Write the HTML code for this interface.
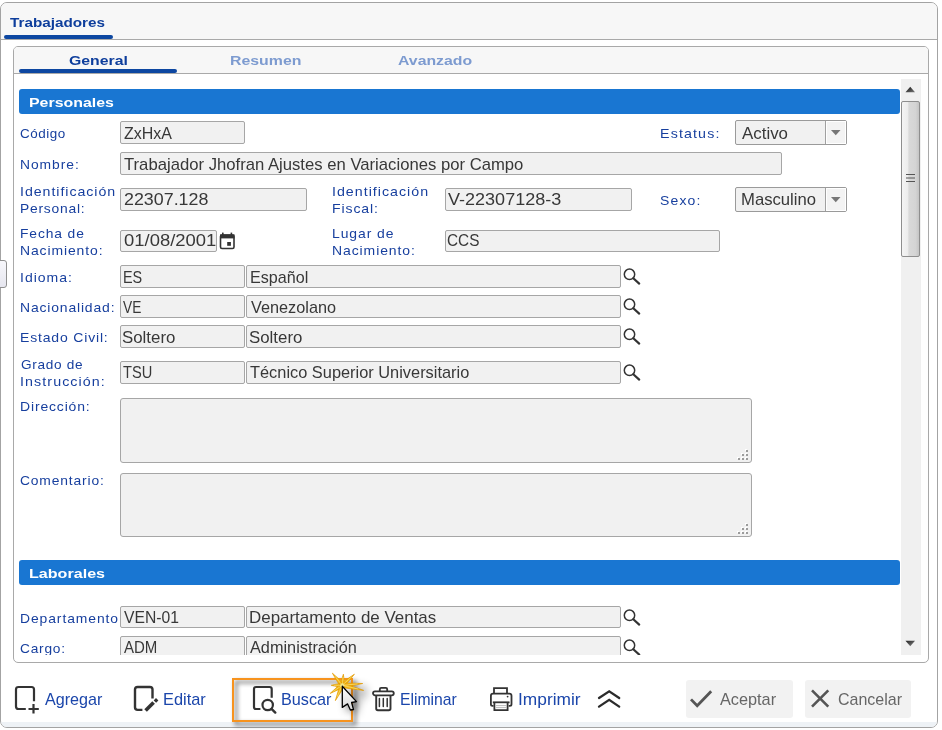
<!DOCTYPE html>
<html><head><meta charset="utf-8">
<style>
html,body{margin:0;padding:0;background:#fff;width:942px;height:730px;overflow:hidden;position:relative}
.a{position:absolute;box-sizing:border-box}
.t{position:absolute;white-space:nowrap;line-height:1;transform-origin:0 0;font-family:"Liberation Sans",sans-serif}
.inp{position:absolute;box-sizing:border-box;background:#f1f1f1;border:1px solid #a6a6a6;border-radius:2px}
svg{position:absolute;overflow:visible}
</style></head><body>
<!-- outer window -->
<div class="a" style="left:0;top:2px;width:938px;height:726px;border:1px solid #a3a3a3;border-radius:7px;background:#fff;overflow:hidden">
  <div class="a" style="left:0;top:0;width:936px;height:37px;background:#f7f7f7;border-bottom:1px solid #a9a9a9"></div>
  <div class="a" style="left:0;top:719px;width:936px;height:5px;background:#eef2f6"></div>
</div>
<div class="a" style="left:4px;top:35px;width:109px;height:4px;background:#0d47a1;border-radius:2px"></div>
<!-- left handle -->
<div class="a" style="left:-4px;top:260px;width:11px;height:28px;border:1px solid #8f8f8f;border-radius:3px;background:linear-gradient(#f7f7fb,#e6e6ef)"></div>
<!-- inner box -->
<div class="a" style="left:13px;top:46px;width:916px;height:617px;border:1px solid #a9a9a9;border-radius:5px;background:#fff;overflow:hidden">
  <div class="a" style="left:0;top:0;width:914px;height:27px;background:#f7f7f7;border-bottom:1px solid #a9a9a9"></div>
</div>
<div class="a" style="left:19px;top:69px;width:158px;height:4px;background:#0d47a1;border-radius:2px"></div>
<!-- scroll viewport -->
<div class="a" style="left:14px;top:74px;width:914px;height:581px;overflow:hidden">
<div class="a" style="left:-14px;top:-74px;width:942px;height:730px">
  <div class="a" style="left:19px;top:89px;width:881px;height:25px;background:#1976d2;border-radius:3px"></div>
  <div class="a" style="left:19px;top:560px;width:881px;height:25px;background:#1976d2;border-radius:3px"></div>
  <div class="inp" style="left:120px;top:121px;width:125px;height:23px"></div>
  <div class="inp" style="left:120px;top:152px;width:662px;height:23px"></div>
  <div class="inp" style="left:120px;top:188px;width:187px;height:23px"></div>
  <div class="inp" style="left:445px;top:188px;width:187px;height:23px"></div>
  <div class="inp" style="left:120px;top:230px;width:97px;height:22px"></div>
  <div class="inp" style="left:445px;top:230px;width:275px;height:22px"></div>
  <!-- selects -->
  <div class="inp" style="left:735px;top:120px;width:112px;height:25px;border-color:#9a9a9a"></div>
  <div class="a" style="left:825px;top:121px;width:21px;height:23px;border-left:1px solid #a0a0a0;box-shadow:inset 1px 1px 0 #fff,inset -1px -1px 0 #fff;background:#f3f3f3"></div>
  <svg style="left:831px;top:130px" width="10" height="6"><path d="M0 0H9.5L4.75 5.2Z" fill="#767676"/></svg>
  <div class="inp" style="left:735px;top:187px;width:112px;height:25px;border-color:#9a9a9a"></div>
  <div class="a" style="left:825px;top:188px;width:21px;height:23px;border-left:1px solid #a0a0a0;box-shadow:inset 1px 1px 0 #fff,inset -1px -1px 0 #fff;background:#f3f3f3"></div>
  <svg style="left:831px;top:197px" width="10" height="6"><path d="M0 0H9.5L4.75 5.2Z" fill="#767676"/></svg>
  <!-- calendar -->
  <svg style="left:219px;top:232px" width="17" height="18" viewBox="0 0 17 18">
    <rect x="1.5" y="3" width="13.5" height="13.5" rx="1.5" fill="none" stroke="#333" stroke-width="1.6"/>
    <rect x="1" y="2.4" width="14.5" height="4" fill="#333"/>
    <rect x="3" y="0.6" width="1.6" height="2.5" fill="#333"/>
    <rect x="11.6" y="0.6" width="1.6" height="2.5" fill="#333"/>
    <rect x="8.2" y="10" width="3.7" height="3.8" fill="#333"/>
  </svg>
  <!-- lookup rows -->
  <div class="inp" style="left:120px;top:265px;width:125px;height:23px"></div>
  <div class="inp" style="left:246px;top:265px;width:375px;height:23px"></div>
  <div class="inp" style="left:120px;top:295px;width:125px;height:23px"></div>
  <div class="inp" style="left:246px;top:295px;width:375px;height:23px"></div>
  <div class="inp" style="left:120px;top:325px;width:125px;height:23px"></div>
  <div class="inp" style="left:246px;top:325px;width:375px;height:23px"></div>
  <div class="inp" style="left:120px;top:361px;width:125px;height:23px"></div>
  <div class="inp" style="left:246px;top:361px;width:375px;height:23px"></div>
  <div class="inp" style="left:120px;top:606px;width:125px;height:22px"></div>
  <div class="inp" style="left:246px;top:606px;width:375px;height:22px"></div>
  <div class="inp" style="left:120px;top:636px;width:125px;height:23px"></div>
  <div class="inp" style="left:246px;top:636px;width:375px;height:23px"></div>
  <svg style="left:620px;top:265px" width="24" height="24" viewBox="0 0 24 24"><circle cx="9.5" cy="9.3" r="5.2" fill="none" stroke="#333" stroke-width="1.5"/><path d="M13.3 13.3L19.2 18.6" stroke="#333" stroke-width="2.2" stroke-linecap="round"/></svg>
<svg style="left:620px;top:295px" width="24" height="24" viewBox="0 0 24 24"><circle cx="9.5" cy="9.3" r="5.2" fill="none" stroke="#333" stroke-width="1.5"/><path d="M13.3 13.3L19.2 18.6" stroke="#333" stroke-width="2.2" stroke-linecap="round"/></svg>
<svg style="left:620px;top:325px" width="24" height="24" viewBox="0 0 24 24"><circle cx="9.5" cy="9.3" r="5.2" fill="none" stroke="#333" stroke-width="1.5"/><path d="M13.3 13.3L19.2 18.6" stroke="#333" stroke-width="2.2" stroke-linecap="round"/></svg>
<svg style="left:620px;top:361px" width="24" height="24" viewBox="0 0 24 24"><circle cx="9.5" cy="9.3" r="5.2" fill="none" stroke="#333" stroke-width="1.5"/><path d="M13.3 13.3L19.2 18.6" stroke="#333" stroke-width="2.2" stroke-linecap="round"/></svg>
<svg style="left:620px;top:606px" width="24" height="24" viewBox="0 0 24 24"><circle cx="9.5" cy="9.3" r="5.2" fill="none" stroke="#333" stroke-width="1.5"/><path d="M13.3 13.3L19.2 18.6" stroke="#333" stroke-width="2.2" stroke-linecap="round"/></svg>
<svg style="left:620px;top:636px" width="24" height="24" viewBox="0 0 24 24"><circle cx="9.5" cy="9.3" r="5.2" fill="none" stroke="#333" stroke-width="1.5"/><path d="M13.3 13.3L19.2 18.6" stroke="#333" stroke-width="2.2" stroke-linecap="round"/></svg>
  <!-- textareas -->
  <div class="inp" style="left:120px;top:398px;width:632px;height:65px;border-radius:3px"></div>
  <div class="inp" style="left:120px;top:473px;width:632px;height:64px;border-radius:3px"></div>
  <div class="a" style="left:738px;top:458px;width:2px;height:2px;background:#9c9c9c;box-shadow:-1px -1px 0 #fff"></div>
<div class="a" style="left:742px;top:454px;width:2px;height:2px;background:#9c9c9c;box-shadow:-1px -1px 0 #fff"></div>
<div class="a" style="left:742px;top:458px;width:2px;height:2px;background:#9c9c9c;box-shadow:-1px -1px 0 #fff"></div>
<div class="a" style="left:746px;top:450px;width:2px;height:2px;background:#9c9c9c;box-shadow:-1px -1px 0 #fff"></div>
<div class="a" style="left:746px;top:454px;width:2px;height:2px;background:#9c9c9c;box-shadow:-1px -1px 0 #fff"></div>
<div class="a" style="left:746px;top:458px;width:2px;height:2px;background:#9c9c9c;box-shadow:-1px -1px 0 #fff"></div>
<div class="a" style="left:738px;top:532px;width:2px;height:2px;background:#9c9c9c;box-shadow:-1px -1px 0 #fff"></div>
<div class="a" style="left:742px;top:528px;width:2px;height:2px;background:#9c9c9c;box-shadow:-1px -1px 0 #fff"></div>
<div class="a" style="left:742px;top:532px;width:2px;height:2px;background:#9c9c9c;box-shadow:-1px -1px 0 #fff"></div>
<div class="a" style="left:746px;top:524px;width:2px;height:2px;background:#9c9c9c;box-shadow:-1px -1px 0 #fff"></div>
<div class="a" style="left:746px;top:528px;width:2px;height:2px;background:#9c9c9c;box-shadow:-1px -1px 0 #fff"></div>
<div class="a" style="left:746px;top:532px;width:2px;height:2px;background:#9c9c9c;box-shadow:-1px -1px 0 #fff"></div>
  <div class="t" style="left:28.5px;top:96.0px;font-size:13px;font-weight:700;color:#ffffff;letter-spacing:0.000px;transform:scaleX(1.2235)">Personales</div>
<div class="t" style="left:28.5px;top:567.0px;font-size:13px;font-weight:700;color:#ffffff;letter-spacing:0.000px;transform:scaleX(1.2383)">Laborales</div>
<div class="t" style="left:19.7px;top:127.0px;font-size:13px;font-weight:400;color:#173f9e;letter-spacing:0.503px;transform:scaleX(1.0341)">Código</div>
<div class="t" style="left:19.9px;top:158.0px;font-size:13px;font-weight:400;color:#173f9e;letter-spacing:0.905px;transform:scaleX(1.0649)">Nombre:</div>
<div class="t" style="left:19.9px;top:185.0px;font-size:13px;font-weight:400;color:#173f9e;letter-spacing:0.881px;transform:scaleX(1.0896)">Identificación</div>
<div class="t" style="left:19.9px;top:202.0px;font-size:13px;font-weight:400;color:#173f9e;letter-spacing:0.733px;transform:scaleX(1.0634)">Personal:</div>
<div class="t" style="left:19.9px;top:227.0px;font-size:13px;font-weight:400;color:#173f9e;letter-spacing:0.838px;transform:scaleX(1.0634)">Fecha de</div>
<div class="t" style="left:19.9px;top:244.0px;font-size:13px;font-weight:400;color:#173f9e;letter-spacing:0.837px;transform:scaleX(1.0721)">Nacimiento:</div>
<div class="t" style="left:660.1px;top:127.0px;font-size:13px;font-weight:400;color:#173f9e;letter-spacing:1.035px;transform:scaleX(1.0949)">Estatus:</div>
<div class="t" style="left:660.1px;top:194.0px;font-size:13px;font-weight:400;color:#173f9e;letter-spacing:1.057px;transform:scaleX(1.0766)">Sexo:</div>
<div class="t" style="left:331.9px;top:185.0px;font-size:13px;font-weight:400;color:#173f9e;letter-spacing:0.919px;transform:scaleX(1.0938)">Identificación</div>
<div class="t" style="left:331.9px;top:202.0px;font-size:13px;font-weight:400;color:#173f9e;letter-spacing:0.823px;transform:scaleX(1.0797)">Fiscal:</div>
<div class="t" style="left:331.9px;top:227.0px;font-size:13px;font-weight:400;color:#173f9e;letter-spacing:0.876px;transform:scaleX(1.0707)">Lugar de</div>
<div class="t" style="left:331.9px;top:244.0px;font-size:13px;font-weight:400;color:#173f9e;letter-spacing:0.854px;transform:scaleX(1.0737)">Nacimiento:</div>
<div class="t" style="left:19.8px;top:271.0px;font-size:13px;font-weight:400;color:#173f9e;letter-spacing:0.924px;transform:scaleX(1.0785)">Idioma:</div>
<div class="t" style="left:19.8px;top:301.0px;font-size:13px;font-weight:400;color:#173f9e;letter-spacing:0.789px;transform:scaleX(1.0709)">Nacionalidad:</div>
<div class="t" style="left:19.8px;top:331.0px;font-size:13px;font-weight:400;color:#173f9e;letter-spacing:0.775px;transform:scaleX(1.0759)">Estado Civil:</div>
<div class="t" style="left:20.9px;top:358.0px;font-size:13px;font-weight:400;color:#173f9e;letter-spacing:0.656px;transform:scaleX(1.0480)">Grado de</div>
<div class="t" style="left:19.8px;top:375.0px;font-size:13px;font-weight:400;color:#173f9e;letter-spacing:0.979px;transform:scaleX(1.0980)">Instrucción:</div>
<div class="t" style="left:20.0px;top:400.0px;font-size:13px;font-weight:400;color:#173f9e;letter-spacing:0.794px;transform:scaleX(1.0737)">Dirección:</div>
<div class="t" style="left:19.7px;top:474.0px;font-size:13px;font-weight:400;color:#173f9e;letter-spacing:0.788px;transform:scaleX(1.0645)">Comentario:</div>
<div class="t" style="left:19.8px;top:612.0px;font-size:13px;font-weight:400;color:#173f9e;letter-spacing:0.864px;transform:scaleX(1.0674)">Departamento</div>
<div class="t" style="left:19.5px;top:642.0px;font-size:13px;font-weight:400;color:#173f9e;letter-spacing:0.727px;transform:scaleX(1.0543)">Cargo:</div>
<div class="t" style="left:123.5px;top:126.0px;font-size:15.75px;font-weight:400;color:#383838;letter-spacing:0.000px;transform:scaleX(1.0170)">ZxHxA</div>
<div class="t" style="left:123.5px;top:157.0px;font-size:15.75px;font-weight:400;color:#383838;letter-spacing:0.000px;transform:scaleX(1.0584)">Trabajador Jhofran Ajustes en Variaciones por Campo</div>
<div class="t" style="left:123.5px;top:192.0px;font-size:15.75px;font-weight:400;color:#383838;letter-spacing:0.000px;transform:scaleX(1.1338)">22307.128</div>
<div class="t" style="left:448.1px;top:192.0px;font-size:15.75px;font-weight:400;color:#383838;letter-spacing:0.000px;transform:scaleX(1.1444)">V-22307128-3</div>
<div class="t" style="left:741.6px;top:126.0px;font-size:15.75px;font-weight:400;color:#383838;letter-spacing:0.000px;transform:scaleX(1.0721)">Activo</div>
<div class="t" style="left:740.5px;top:192.0px;font-size:15.75px;font-weight:400;color:#383838;letter-spacing:0.000px;transform:scaleX(1.0586)">Masculino</div>
<div class="t" style="left:123.5px;top:233.0px;font-size:15.75px;font-weight:400;color:#383838;letter-spacing:0.000px;transform:scaleX(1.1705)">01/08/2001</div>
<div class="t" style="left:447.1px;top:233.0px;font-size:15.75px;font-weight:400;color:#383838;letter-spacing:0.000px;transform:scaleX(0.9750)">CCS</div>
<div class="t" style="left:122.5px;top:270.0px;font-size:15.75px;font-weight:400;color:#383838;letter-spacing:0.000px;transform:scaleX(0.9150)">ES</div>
<div class="t" style="left:249.5px;top:270.0px;font-size:15.75px;font-weight:400;color:#383838;letter-spacing:0.000px;transform:scaleX(1.0236)">Español</div>
<div class="t" style="left:123.4px;top:300.0px;font-size:15.75px;font-weight:400;color:#383838;letter-spacing:0.000px;transform:scaleX(0.8714)">VE</div>
<div class="t" style="left:250.5px;top:300.0px;font-size:15.75px;font-weight:400;color:#383838;letter-spacing:0.000px;transform:scaleX(1.0329)">Venezolano</div>
<div class="t" style="left:122.3px;top:330.0px;font-size:15.75px;font-weight:400;color:#383838;letter-spacing:0.000px;transform:scaleX(1.0694)">Soltero</div>
<div class="t" style="left:249.4px;top:330.0px;font-size:15.75px;font-weight:400;color:#383838;letter-spacing:0.000px;transform:scaleX(1.0694)">Soltero</div>
<div class="t" style="left:123.4px;top:365.0px;font-size:15.75px;font-weight:400;color:#383838;letter-spacing:0.000px;transform:scaleX(0.9290)">TSU</div>
<div class="t" style="left:249.8px;top:365.0px;font-size:15.75px;font-weight:400;color:#383838;letter-spacing:0.000px;transform:scaleX(1.0393)">Técnico Superior Universitario</div>
<div class="t" style="left:123.7px;top:610.0px;font-size:15.75px;font-weight:400;color:#383838;letter-spacing:0.000px;transform:scaleX(0.9964)">VEN-01</div>
<div class="t" style="left:249.3px;top:610.0px;font-size:15.75px;font-weight:400;color:#383838;letter-spacing:0.000px;transform:scaleX(1.0746)">Departamento de Ventas</div>
<div class="t" style="left:123.7px;top:640.0px;font-size:15.75px;font-weight:400;color:#383838;letter-spacing:0.000px;transform:scaleX(0.9529)">ADM</div>
<div class="t" style="left:250.4px;top:640.0px;font-size:15.75px;font-weight:400;color:#383838;letter-spacing:0.000px;transform:scaleX(1.0340)">Administración</div>
</div>
</div>
<!-- scrollbar -->
<div class="a" style="left:901px;top:79px;width:20px;height:576px;background:#f0f0f0"></div>
<svg style="left:905px;top:86px" width="11" height="7"><defs><linearGradient id="ug" x1="0" y1="0" x2="1" y2="1"><stop offset="0" stop-color="#111"/><stop offset="1" stop-color="#777"/></linearGradient></defs><path d="M0.5 6.2H10L5.25 0.8Z" fill="url(#ug)"/></svg>
<div class="a" style="left:901px;top:101px;width:19px;height:156px;border:1px solid #8e8e8e;border-radius:2px;background:linear-gradient(90deg,#f4f4f4 0,#ececec 35%,#d9d9d9 40%,#d4d4d4 80%,#c4c4c4 100%)"></div>
<svg style="left:905px;top:173px" width="11" height="11"><path d="M1 1.5H10M1 5H10M1 8.5H10" stroke="#555" stroke-width="1"/></svg>
<svg style="left:905px;top:640px" width="11" height="7"><defs><linearGradient id="dg" x1="0" y1="0" x2="1" y2="1"><stop offset="0" stop-color="#222"/><stop offset="1" stop-color="#888"/></linearGradient></defs><path d="M0.5 0.8H10L5.25 6.2Z" fill="url(#dg)"/></svg>
<!-- Agregar icon -->
<svg style="left:10px;top:682px" width="35" height="35" viewBox="0 0 35 35">
  <path d="M15.8 27H8.5Q6 27 6 24.5V7.5Q6 5 8.5 5H21.5Q24 5 24 7.5V19.3" fill="none" stroke="#333" stroke-width="2.2"/>
  <path d="M18.5 27H28.8M23.5 22V31.5" fill="none" stroke="#333" stroke-width="2.2"/>
</svg>
<!-- Editar icon -->
<svg style="left:128px;top:682px" width="35" height="35" viewBox="0 0 35 35">
  <path d="M14.4 27.9H9.6Q7 27.9 7 25.3V7.6Q7 5 9.6 5H21.9Q24.5 5 24.5 7.6V16.4" fill="none" stroke="#333" stroke-width="2.4"/>
  <path d="M17.6 28.6L25.6 20.6" fill="none" stroke="#333" stroke-width="3.6"/>
  <path d="M26.9 19.6L29.2 17.3" fill="none" stroke="#333" stroke-width="3.4"/>
</svg>
<!-- orange focus box with inner shadow -->
<svg style="left:222px;top:668px" width="145" height="65" viewBox="0 0 145 65">
  <defs><filter id="fb" x="-20%" y="-50%" width="140%" height="200%"><feGaussianBlur stdDeviation="2"/></filter></defs>
  <rect x="14" y="14" width="119" height="42" fill="none" stroke="#000" stroke-width="3" opacity="0.45" filter="url(#fb)"/>
  <rect x="11" y="11" width="119" height="42" fill="none" stroke="#f7931e" stroke-width="2"/>
</svg>
<!-- Buscar icon -->
<svg style="left:248px;top:682px" width="35" height="35" viewBox="0 0 35 35">
  <path d="M12.4 27H8Q6 27 6 25V7Q6 5 8 5H21.5Q23.7 5 23.7 7V15.8" fill="none" stroke="#333" stroke-width="2.2"/>
  <circle cx="19.7" cy="23" r="5.2" fill="none" stroke="#333" stroke-width="2.2"/>
  <path d="M23.5 26.8L27.3 30.6" fill="none" stroke="#333" stroke-width="2.4" stroke-linecap="round"/>
</svg>
<!-- Eliminar icon -->
<svg style="left:365px;top:682px" width="35" height="35" viewBox="0 0 35 35">
  <rect x="8" y="9.3" width="20.8" height="4" rx="2" fill="none" stroke="#333" stroke-width="1.8"/>
  <path d="M14.8 9V7.2Q14.8 5.8 16.2 5.8H20.8Q22.2 5.8 22.2 7.2V9" fill="none" stroke="#333" stroke-width="1.8"/>
  <path d="M11.2 13.5V26.5Q11.2 28.2 12.9 28.2H23.8Q25.5 28.2 25.5 26.5V13.5" fill="none" stroke="#333" stroke-width="1.9"/>
  <path d="M14.4 16.5V24.5M18.3 16.5V24.5M22.2 16.5V24.5" fill="none" stroke="#333" stroke-width="1.5" stroke-linecap="round"/>
</svg>
<!-- Imprimir icon -->
<svg style="left:484px;top:682px" width="35" height="35" viewBox="0 0 35 35">
  <path d="M10 11.2V6.2H23V11.2" fill="none" stroke="#333" stroke-width="1.8"/>
  <path d="M9.5 23.8H8.5Q6.9 23.8 6.9 22.2V13.8Q6.9 11.6 9.1 11.6H25.3Q27.5 11.6 27.5 13.8V22.2Q27.5 23.8 25.9 23.8H24.7" fill="none" stroke="#333" stroke-width="1.8"/>
  <path d="M8.8 20.3H25.6" fill="none" stroke="#333" stroke-width="1.8"/>
  <path d="M10.4 20.3V28.2H23.6V20.3" fill="none" stroke="#333" stroke-width="1.8"/>
  <path d="M12 23.6H22.4M12 25.6H22.4" stroke="#aaa" stroke-width="0.8"/>
  <circle cx="23.6" cy="14.6" r="0.9" fill="#333"/>
</svg>
<!-- chevrons -->
<svg style="left:590px;top:682px" width="40" height="33" viewBox="0 0 40 33">
  <path d="M9 16L19.2 9.4L29.2 16M9 24.6L19.2 17.8L29.2 24.6" fill="none" stroke="#2b2b2b" stroke-width="2.3" stroke-linecap="round"/>
</svg>
<!-- Aceptar / Cancelar -->
<div class="a" style="left:686px;top:680px;width:107px;height:38px;background:#f2f2f2;border-radius:3px"></div>
<svg style="left:680px;top:672px" width="40" height="40" viewBox="0 0 40 40">
  <path d="M11 27.4L17.2 33.8L31.2 19.2" fill="none" stroke="#555" stroke-width="2.8" />
</svg>
<div class="a" style="left:805px;top:680px;width:106px;height:38px;background:#f2f2f2;border-radius:3px"></div>
<svg style="left:800px;top:672px" width="40" height="40" viewBox="0 0 40 40">
  <path d="M12 18.8L28.3 35.2M28.3 18.8L12 35.2" fill="none" stroke="#555" stroke-width="2.6" transform="translate(0,-0.5)"/>
</svg>
<!-- starburst + cursor -->
<svg style="left:322px;top:668px" width="50" height="50" viewBox="0 0 50 50">
  <defs><filter id="blur" x="-50%" y="-50%" width="200%" height="200%"><feGaussianBlur stdDeviation="2.2"/></filter></defs>
  <defs><filter id="blur2" x="-100%" y="-100%" width="300%" height="300%"><feGaussianBlur stdDeviation="4"/></filter></defs>
  <path d="M20.3 18.2V39.4L25.6 35.9L28.4 42L31.5 41.5L29.6 34.5L34.5 33.6Z" fill="#000" opacity="0.5" filter="url(#blur2)" transform="translate(4,4)"/>
  <path d="M22 12L40 14L42 24L30 30Z" fill="#000" opacity="0.25" filter="url(#blur2)" transform="translate(4,4)"/>
  <g fill="#f2b714" stroke="#e39a03" stroke-width="0.7" stroke-linejoin="round">
<polygon points="22.2,15.8 10.4,5.2 18.4,18.8"/>
<polygon points="22.7,17.5 21.4,6.2 17.9,17.1"/>
<polygon points="21.9,19.1 32.4,6.2 18.7,15.5"/>
<polygon points="20.5,19.7 40.7,15.5 20.1,14.9"/>
<polygon points="19.7,19.6 41.7,22.4 20.9,15.0"/>
<polygon points="20.3,14.9 9.2,17.3 20.3,19.7"/>
<polygon points="19.0,15.3 8.2,25.4 21.6,19.3"/>
<polygon points="18.1,16.3 13.4,32.6 22.5,18.3"/>
  </g>
  <path d="M20.3 17.3L12.9 8.2M20.3 17.3L21.1 9.0M20.3 17.3L29.4 9.0M20.3 17.3L35.6 15.9M20.3 17.3L36.3 21.1M20.3 17.3L12.0 17.3M20.3 17.3L11.2 23.4M20.3 17.3L15.1 28.8" stroke="#f6e07a" stroke-width="0.7" fill="none"/>
  <circle cx="20.3" cy="17.3" r="2" fill="#eee48a"/>
  <defs><linearGradient id="cg" x1="0" y1="0" x2="0" y2="1"><stop offset="0" stop-color="#fff"/><stop offset="1" stop-color="#d8d8d8"/></linearGradient></defs>
  <path d="M20.3 18.2V39.4L25.6 35.9L28.4 42L31.5 41.5L29.6 34.5L34.5 33.6Z" fill="url(#cg)" stroke="#000" stroke-width="1.3" stroke-linejoin="round"/>
</svg>


<div class="t" style="left:10.3px;top:16.0px;font-size:13px;font-weight:700;color:#0e3e9c;letter-spacing:0.000px;transform:scaleX(1.1728)">Trabajadores</div>
<div class="t" style="left:68.6px;top:54.0px;font-size:13px;font-weight:700;color:#0e3e9c;letter-spacing:0.000px;transform:scaleX(1.2146)">General</div>
<div class="t" style="left:229.8px;top:54.0px;font-size:13px;font-weight:700;color:#7d9bd0;letter-spacing:0.000px;transform:scaleX(1.2211)">Resumen</div>
<div class="t" style="left:397.5px;top:54.0px;font-size:13px;font-weight:700;color:#7d9bd0;letter-spacing:0.000px;transform:scaleX(1.2164)">Avanzado</div>
<div class="t" style="left:44.7px;top:692.0px;font-size:15.75px;font-weight:400;color:#1b46ab;letter-spacing:0.000px;transform:scaleX(1.0232)">Agregar</div>
<div class="t" style="left:162.9px;top:692.0px;font-size:15.75px;font-weight:400;color:#1b46ab;letter-spacing:0.000px;transform:scaleX(1.0400)">Editar</div>
<div class="t" style="left:280.8px;top:692.0px;font-size:15.75px;font-weight:400;color:#1b46ab;letter-spacing:0.000px;transform:scaleX(1.0292)">Buscar</div>
<div class="t" style="left:399.7px;top:692.0px;font-size:15.75px;font-weight:400;color:#1b46ab;letter-spacing:0.000px;transform:scaleX(0.9982)">Eliminar</div>
<div class="t" style="left:517.9px;top:692.0px;font-size:15.75px;font-weight:400;color:#1b46ab;letter-spacing:0.000px;transform:scaleX(1.1000)">Imprimir</div>
<div class="t" style="left:719.7px;top:692.0px;font-size:15.75px;font-weight:400;color:#666666;letter-spacing:0.000px;transform:scaleX(1.0333)">Aceptar</div>
<div class="t" style="left:837.9px;top:692.0px;font-size:15.75px;font-weight:400;color:#666666;letter-spacing:0.000px;transform:scaleX(1.0161)">Cancelar</div>
</body></html>
